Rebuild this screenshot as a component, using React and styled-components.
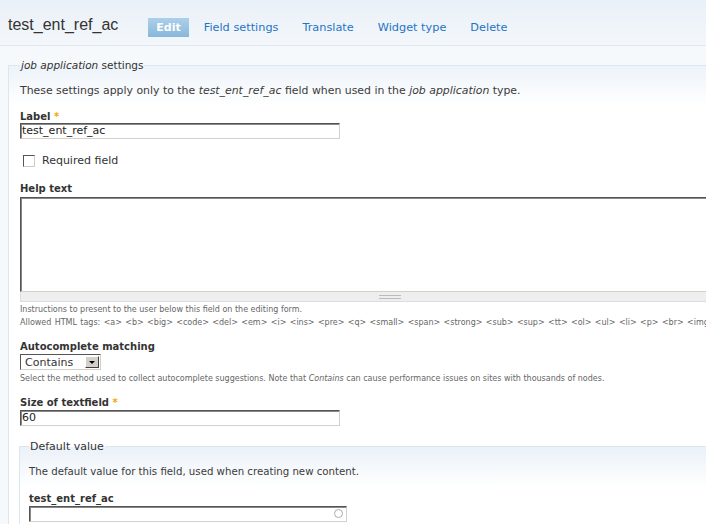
import React from "react";
import styled, { createGlobalStyle } from "styled-components";

const GlobalStyle = createGlobalStyle`
  html, body {
    margin: 0;
    padding: 0;
    background: #f6f9fc;
    overflow: hidden;
  }
  body {
    font-family: "DejaVu Sans", Verdana, sans-serif;
    color: #333;
  }
`;

const Page = styled.div`
  width: 760px;
  min-height: 524px;
  background: #f6f9fc;
`;

const Header = styled.div`
  display: flex;
  align-items: center;
  box-sizing: border-box;
  height: 46px;
  padding: 9px 0 0 8px;
  background: linear-gradient(#e9f0f7, #f3f7fb);
  border-bottom: 1px solid #dfe7ef;
`;

const Title = styled.h1`
  margin: 0 30px 4px 0;
  font-family: "Liberation Sans", Arial, sans-serif;
  font-weight: normal;
  font-size: 16px;
  color: #333;
`;

const Tabs = styled.ul`
  display: flex;
  gap: 6px;
  list-style: none;
  margin: 0;
  padding: 0;
`;

const Tab = styled.li`
  height: 19px;
  line-height: 19px;
  padding: 0 ${(p) => (p.$active ? "8px" : "9px")};
  font-size: ${(p) => (p.$active ? "11px" : "11.3px")};
  font-weight: ${(p) => (p.$active ? "bold" : "normal")};
  color: ${(p) => (p.$active ? "#fff" : "#1f74c6")};
  background: ${(p) => (p.$active ? "linear-gradient(#acd0ea, #88b7da)" : "none")};
`;

const Main = styled.div`
  padding: 13px 0 0 8px;
`;

const Fieldset = styled.fieldset`
  margin: 0;
  padding: 0 0 4px 11px;
  border: none;
  border-top: 1px solid #dce6ef;
  border-left: 1px solid #dce6ef;
  background: linear-gradient(#edf3f9, #ffffff 40px);
`;

const Legend = styled.legend`
  padding: 0 1px;
  font-size: ${(p) => p.$size || "10.5px"};
  color: #333;
`;

const Description = styled.p`
  margin: ${(p) => p.$margin || "0"};
  font-size: ${(p) => p.$size || "10.9px"};
  line-height: 13px;
  color: #3b3b3b;
`;

const FormItem = styled.div`
  margin-top: ${(p) => p.$top || "0"};
`;

const Label = styled.label`
  display: block;
  font-size: 10px;
  font-weight: bold;
  line-height: 13px;
  color: #333;
`;

const Required = styled.span`
  color: #f7a700;
`;

const TextInput = styled.div`
  position: relative;
  box-sizing: border-box;
  width: ${(p) => p.$width || "320px"};
  height: 16px;
  margin-top: ${(p) => p.$gap || "0"};
  padding: 0 1px;
  border: 1px solid;
  border-color: #555 #d4d0c8 #d4d0c8 #555;
  box-shadow: inset 1px 1px 0 #888;
  background: #fff;
  font-size: 11px;
  line-height: 14px;
  color: #222;
`;

const Throbber = styled.span`
  position: absolute;
  right: 3px;
  top: 2px;
  width: 7px;
  height: 7px;
  border: 1.5px solid #aaa;
  border-radius: 50%;
`;

const CheckRow = styled.div`
  display: flex;
  align-items: center;
  gap: 7px;
  margin: 15px 0 0 3px;
  font-size: 11px;
`;

const CheckBox = styled.span`
  box-sizing: border-box;
  width: 12px;
  height: 12px;
  border: 1px solid;
  border-color: #555 #ccc #ccc #555;
  background: #fff;
`;

const TextArea = styled.div`
  box-sizing: border-box;
  height: 95px;
  margin-top: 2px;
  border: 1px solid;
  border-color: #555 #d4d0c8 #d4d0c8 #555;
  box-shadow: inset 1px 1px 0 #888;
  background: #fff;
`;

const Grippie = styled.div`
  display: flex;
  justify-content: center;
  align-items: center;
  height: 9px;
  background: #eee;
  border: 1px solid #ddd;
  border-top: none;
  &::after {
    content: "";
    width: 22px;
    height: 2px;
    border-top: 1px solid #bbb;
    border-bottom: 1px solid #bbb;
  }
`;

const Small = styled.div`
  margin-top: ${(p) => p.$top || "0"};
  font-size: 8px;
  line-height: 13px;
  color: #666;
  white-space: nowrap;
  word-spacing: ${(p) => p.$spread || "normal"};
`;

const Select = styled.div`
  display: flex;
  align-items: center;
  justify-content: space-between;
  box-sizing: border-box;
  width: 81px;
  height: 16px;
  margin-top: 1px;
  padding: 0 1px 0 4px;
  border: 1px solid;
  border-color: #555 #d4d0c8 #d4d0c8 #555;
  background: #fff;
  font-size: 11px;
`;

const SelectButton = styled.span`
  display: flex;
  align-items: center;
  justify-content: center;
  box-sizing: border-box;
  width: 14px;
  height: 12px;
  background: #d4d0c8;
  border: 1px solid;
  border-color: #fff #404040 #404040 #fff;
  &::after {
    content: "";
    border-left: 3px solid transparent;
    border-right: 3px solid transparent;
    border-top: 3px solid #000;
  }
`;

const NestedFieldset = styled(Fieldset)`
  margin: 14px 0 0 -1px;
  padding-left: 9px;
  background: linear-gradient(#eaf1f8, #ffffff 40px);
`;

export default function App() {
  return (
    <Page>
      <GlobalStyle />
      <Header>
        <Title>test_ent_ref_ac</Title>
        <Tabs>
          <Tab $active>Edit</Tab>
          <Tab>Field settings</Tab>
          <Tab>Translate</Tab>
          <Tab>Widget type</Tab>
          <Tab>Delete</Tab>
        </Tabs>
      </Header>
      <Main>
        <Fieldset>
          <Legend>
            <em>job application</em> settings
          </Legend>
          <Description $margin="13px 0 0 0">
            These settings apply only to the <em>test_ent_ref_ac</em> field when used in the{" "}
            <em>job application</em> type.
          </Description>
          <FormItem $top="13px">
            <Label>
              Label <Required>*</Required>
            </Label>
            <TextInput>test_ent_ref_ac</TextInput>
          </FormItem>
          <CheckRow>
            <CheckBox />
            Required field
          </CheckRow>
          <FormItem $top="15px">
            <Label>Help text</Label>
            <TextArea />
            <Grippie />
            <Small $top="1px">Instructions to present to the user below this field on the editing form.</Small>
            <Small $spread="0.8px">
              {"Allowed HTML tags: <a> <b> <big> <code> <del> <em> <i> <ins> <pre> <q> <small> <span> <strong> <sub> <sup> <tt> <ol> <ul> <li> <p> <br> <img>"}
            </Small>
          </FormItem>
          <FormItem $top="11px">
            <Label>Autocomplete matching</Label>
            <Select>
              Contains
              <SelectButton />
            </Select>
            <Small $top="2px">
              Select the method used to collect autocomplete suggestions. Note that <em>Contains</em> can
              cause performance issues on sites with thousands of nodes.
            </Small>
          </FormItem>
          <FormItem $top="11px">
            <Label>
              Size of textfield <Required>*</Required>
            </Label>
            <TextInput $gap="1px">60</TextInput>
          </FormItem>
          <NestedFieldset>
            <Legend $size="11px">Default value</Legend>
            <Description $margin="12px 0 0 0" $size="10.2px">
              The default value for this field, used when creating new content.
            </Description>
            <FormItem $top="14px">
              <Label>test_ent_ref_ac</Label>
              <TextInput $width="318px" $gap="1px">
                <Throbber />
              </TextInput>
            </FormItem>
          </NestedFieldset>
        </Fieldset>
      </Main>
    </Page>
  );
}
